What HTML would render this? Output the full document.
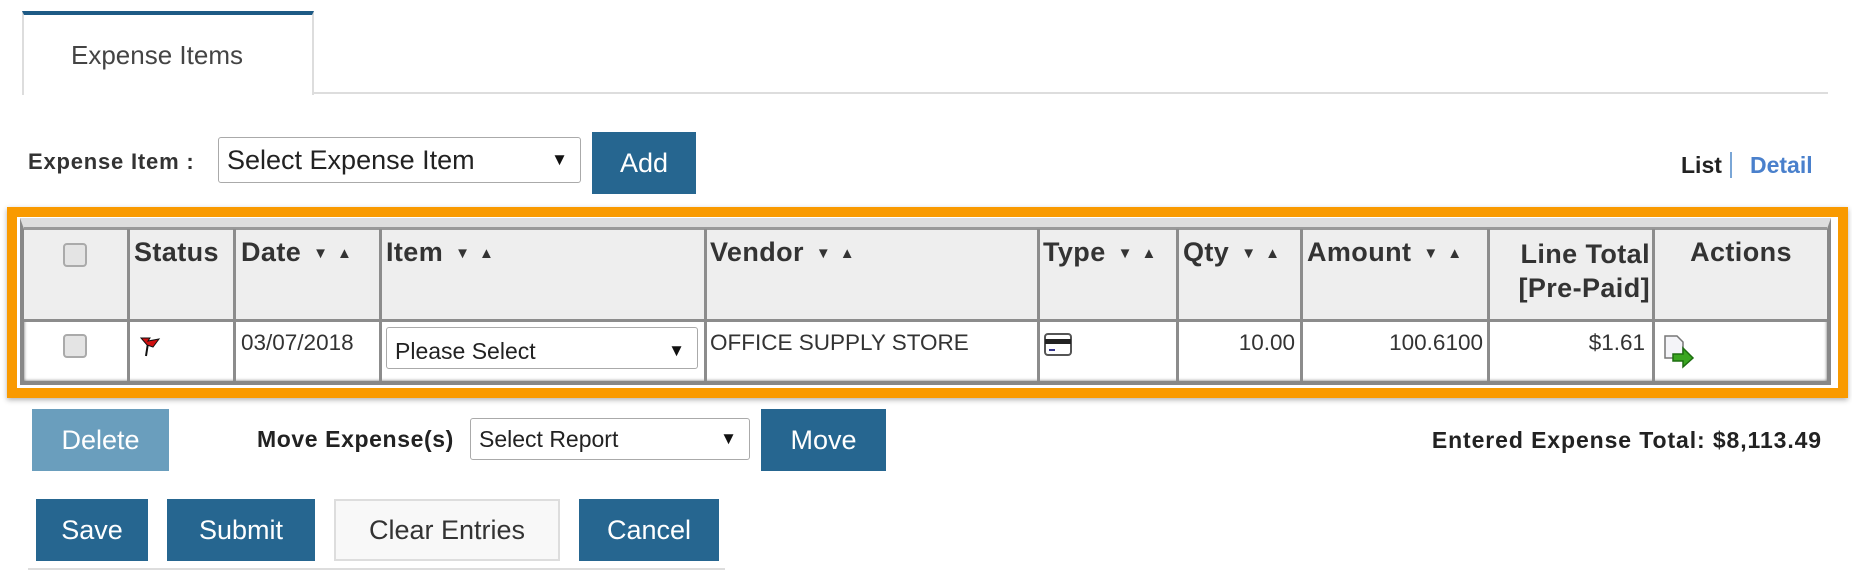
<!DOCTYPE html>
<html><head><meta charset="utf-8">
<style>
*{box-sizing:border-box;margin:0;padding:0}
body{width:1852px;height:584px;background:#fff;position:relative;overflow:hidden;font-family:"Liberation Sans",sans-serif;color:#333}
.a{position:absolute}
.btn{position:absolute;background:#266690;color:#fff;font-size:27px;display:flex;align-items:center;justify-content:center}
.sel{position:absolute;background:#fff;border:1.5px solid #aaa;border-radius:3px;color:#222;display:flex;align-items:center;padding-left:8px}
.sel:after{content:"\25BC";position:absolute;right:12px;font-size:17px;color:#111}
.col{position:absolute;top:229px;height:152px;width:3px;background:#8c8c8c}
.h{position:absolute;top:237px;font-weight:bold;font-size:27px;letter-spacing:0.4px;color:#333;white-space:nowrap}
.h small{font-size:15px;margin-left:12px;letter-spacing:9px;vertical-align:3px}
.d{position:absolute;top:330px;font-size:22.5px;color:#333;white-space:nowrap}
.cb{position:absolute;width:24px;height:24px;border:2px solid #aaa;border-radius:4px;background:#e4e4e4}
</style></head><body>
<div class="a" style="left:22px;top:11px;width:292px;height:84px;border-left:2px solid #ddd;border-right:2px solid #ddd;border-top:4px solid #1d5a85;background:#fff"></div>
<div class="a" style="left:71px;top:40px;font-size:26px;color:#444">Expense Items</div>
<div class="a" style="left:314px;top:92px;width:1514px;height:2px;background:#ddd"></div>

<div class="a" style="left:28px;top:149px;font-size:22px;letter-spacing:0.8px;font-weight:bold;color:#333">Expense Item :</div>
<div class="sel" style="left:218px;top:137px;width:363px;height:46px;font-size:27px">Select Expense Item</div>
<div class="btn" style="left:592px;top:132px;width:104px;height:62px">Add</div>
<div class="a" style="left:1681px;top:152px;font-size:23px;font-weight:bold;color:#222">List</div>
<div class="a" style="left:1730px;top:152px;width:2px;height:26px;background:#7aa6d6"></div>
<div class="a" style="left:1750px;top:152px;font-size:23px;font-weight:bold;color:#4a80cc">Detail</div>

<div class="a" style="left:7px;top:207px;width:1841px;height:191px;border:10px solid #f99a00;box-shadow:0 2px 5px rgba(0,0,0,.3)"></div>
<div class="a" style="left:17px;top:217px;width:1821px;height:171px;background:#fff"></div>
<div class="a" style="left:20px;top:218px;width:1811px;height:167px;border:4px solid #888;border-top:11px solid #ddd;box-shadow:inset 0 0 3px #666"></div>
<div class="a" style="left:24px;top:229px;width:1803px;height:91px;background:#eee"></div>
<div class="a" style="left:24px;top:319px;width:1803px;height:3px;background:#8c8c8c"></div>
<div class="a" style="left:24px;top:227px;width:1803px;height:3px;background:#999"></div>
<div class="col" style="left:127px"></div><div class="col" style="left:233px"></div><div class="col" style="left:379px"></div><div class="col" style="left:704px"></div><div class="col" style="left:1037px"></div><div class="col" style="left:1176px"></div><div class="col" style="left:1300px"></div><div class="col" style="left:1487px"></div><div class="col" style="left:1652px"></div>

<div class="cb" style="left:63px;top:243px"></div>
<div class="h" style="left:134px">Status</div>
<div class="h" style="left:241px">Date<small>▼▲</small></div>
<div class="h" style="left:386px">Item<small>▼▲</small></div>
<div class="h" style="left:710px">Vendor<small>▼▲</small></div>
<div class="h" style="left:1043px">Type<small>▼▲</small></div>
<div class="h" style="left:1183px">Qty<small>▼▲</small></div>
<div class="h" style="left:1307px">Amount<small>▼▲</small></div>
<div class="h" style="left:1490px;width:160px;text-align:right;line-height:34px">Line Total<br>[Pre-Paid]</div>
<div class="h" style="left:1655px;width:172px;text-align:center">Actions</div>

<div class="cb" style="left:63px;top:334px"></div>
<svg class="a" style="left:138px;top:334px" width="24" height="24" viewBox="0 0 24 24"><path d="M6 4 L10 9 L8 22" stroke="#111" stroke-width="2" fill="none"/><path d="M3 4 L12 4 L10 7 L21 5 L15 13 L9 11 Z" fill="#d01010" stroke="#111" stroke-width="1"/></svg>
<div class="d" style="left:241px">03/07/2018</div>
<div class="sel" style="left:386px;top:327px;width:312px;height:42px;font-size:23px;padding-top:6px">Please Select</div>
<div class="d" style="left:710px">OFFICE SUPPLY STORE</div>
<svg class="a" style="left:1044px;top:333px" width="28" height="23" viewBox="0 0 28 23"><rect x="1" y="1" width="26" height="21" rx="3" fill="#fff" stroke="#555" stroke-width="2"/><rect x="1" y="6" width="26" height="5" fill="#222"/><rect x="5" y="16" width="6" height="2" fill="#338"/></svg>
<div class="d" style="left:1180px;width:115px;text-align:right">10.00</div>
<div class="d" style="left:1303px;width:180px;text-align:right">100.6100</div>
<div class="d" style="left:1490px;width:155px;text-align:right">$1.61</div>
<svg class="a" style="left:1662px;top:334px" width="36" height="36" viewBox="0 0 36 36"><path d="M3 2 H15 L21 8 V24 H3 Z" fill="#f4f4f8" stroke="#777" stroke-width="1.5"/><path d="M11 20 H21 V14 L31 24 L21 33 V27 H11 Z" fill="#3aa620" stroke="#1d6e10" stroke-width="1.5"/></svg>

<div class="btn" style="left:32px;top:409px;width:137px;height:62px;background:#6a9ebd">Delete</div>
<div class="a" style="left:257px;top:426px;font-size:23px;letter-spacing:0.6px;font-weight:bold;color:#222">Move Expense(s)</div>
<div class="sel" style="left:470px;top:418px;width:280px;height:42px;font-size:23px">Select Report</div>
<div class="btn" style="left:761px;top:409px;width:125px;height:62px">Move</div>
<div class="a" style="left:1322px;top:427px;width:500px;text-align:right;font-size:23px;letter-spacing:0.9px;font-weight:bold;color:#222">Entered Expense Total: $8,113.49</div>

<div class="btn" style="left:36px;top:499px;width:112px;height:62px">Save</div>
<div class="btn" style="left:167px;top:499px;width:148px;height:62px">Submit</div>
<div class="btn" style="left:334px;top:499px;width:226px;height:62px;background:#f8f8f8;color:#333;border:2px solid #ddd">Clear Entries</div>
<div class="btn" style="left:579px;top:499px;width:140px;height:62px">Cancel</div>
<div class="a" style="left:28px;top:568px;width:697px;height:2px;background:#ddd"></div>
</body></html>
